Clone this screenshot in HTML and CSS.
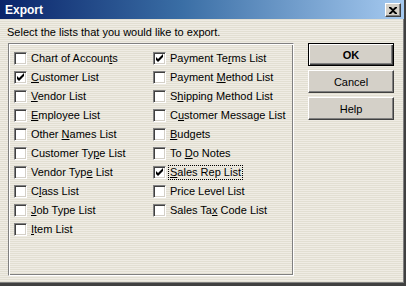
FILE: index.html
```html
<!DOCTYPE html>
<html lang="en">
<head>
    <meta charset="UTF-8">
    <title>Export</title>
    <link rel="stylesheet" href="styles.css">
</head>
<body>
    <div class="window">
        <!-- Title bar -->
        <div class="titlebar">
            <span class="title">Export</span>
            <span class="close">
                <svg width="8" height="7" viewBox="0 0 8 7">
                    <path d="M0 0h2l2 2 2-2h2v1L5 3.5 8 6v1H6L4 5 2 7H0V6l3-2.5L0 1z" fill="#000"/>
                </svg>
            </span>
        </div>

        <div class="content">
            <p class="intro">Select the lists that you would like to export.</p>

            <div class="main">
                <div class="group">
                    <div class="lists">
                        <label class="item"><span class="box"></span><span class="text">Chart of Accoun<u>t</u>s</span></label>
                        <label class="item"><span class="box checked"></span><span class="text">Payment Te<u>r</u>ms List</span></label>

                        <label class="item"><span class="box checked"></span><span class="text"><u>C</u>ustomer List</span></label>
                        <label class="item"><span class="box"></span><span class="text">Payment <u>M</u>ethod List</span></label>

                        <label class="item"><span class="box"></span><span class="text"><u>V</u>endor List</span></label>
                        <label class="item"><span class="box"></span><span class="text">S<u>h</u>ipping Method List</span></label>

                        <label class="item"><span class="box"></span><span class="text"><u>E</u>mployee List</span></label>
                        <label class="item"><span class="box"></span><span class="text">C<u>u</u>stomer Message List</span></label>

                        <label class="item"><span class="box"></span><span class="text">Other <u>N</u>ames List</span></label>
                        <label class="item"><span class="box"></span><span class="text"><u>B</u>udgets</span></label>

                        <label class="item"><span class="box"></span><span class="text">Customer Ty<u>p</u>e List</span></label>
                        <label class="item"><span class="box"></span><span class="text">To <u>D</u>o Notes</span></label>

                        <label class="item"><span class="box"></span><span class="text">Vendor Typ<u>e</u> List</span></label>
                        <label class="item"><span class="box checked"></span><span class="text focus"><u>S</u>ales Rep List</span></label>

                        <label class="item"><span class="box"></span><span class="text">C<u>l</u>ass List</span></label>
                        <label class="item"><span class="box"></span><span class="text">Price Level List</span></label>

                        <label class="item"><span class="box"></span><span class="text"><u>J</u>ob Type List</span></label>
                        <label class="item"><span class="box"></span><span class="text">Sales Ta<u>x</u> Code List</span></label>

                        <label class="item"><span class="box"></span><span class="text"><u>I</u>tem List</span></label>
                    </div>
                </div>

                <div class="buttons">
                    <button class="btn default">OK</button>
                    <button class="btn">Cancel</button>
                    <button class="btn">Help</button>
                </div>
            </div>
        </div>
    </div>
</body>
</html>
```

FILE: styles.css
```css
* {
    margin: 0;
    padding: 0;
    box-sizing: border-box;
    font-family: 'Liberation Sans', Arial, sans-serif;
}

body {
    background: #d4d0c8;
}

/* Dialog window */
.window {
    width: 406px;
    height: 286px;
    display: flex;
    flex-direction: column;
    background: repeating-linear-gradient(180deg, #efece4 0px, #efece4 1px, #e2dfd2 1px, #e2dfd2 2px);
    border-right: 2px solid #404040;
    border-bottom: 3px solid #404040;
    box-shadow: inset -1px -1px #808080;
}

/* Title bar */
.titlebar {
    height: 19px;
    display: flex;
    align-items: center;
    justify-content: space-between;
    padding: 0 3px 0 5px;
    background: linear-gradient(90deg, #0a246a 0%, #3a6ea5 45%, #a6caf0 100%);
}

.title {
    color: #fff;
    font-size: 12px;
    font-weight: bold;
}

.close {
    width: 16px;
    height: 14px;
    display: flex;
    align-items: center;
    justify-content: center;
    background: #d4d0c8;
    border-top: 1px solid #fff;
    border-left: 1px solid #fff;
    border-right: 1px solid #404040;
    border-bottom: 1px solid #404040;
    box-shadow: inset -1px -1px #808080;
    margin-top: 1px;
}

.content {
    flex: 1;
    padding: 7px 0 0 8px;
}

.intro {
    font-size: 11px;
    line-height: 13px;
    color: #000;
    margin-left: -1px;
    margin-bottom: 4px;
}

.main {
    display: flex;
    gap: 14px;
}

/* Group box */
.group {
    width: 286px;
    height: 233px;
    border: 1px solid #808080;
    border-right-color: #fff;
    border-bottom-color: #fff;
    box-shadow: inset 1px 1px #fff, inset -1px -1px #808080;
    padding: 5px 0 0 5px;
}

.lists {
    display: grid;
    grid-template-columns: 139px 1fr;
    grid-auto-rows: 19px;
}

.item {
    display: flex;
    align-items: center;
    font-size: 11px;
    color: #000;
    white-space: nowrap;
}

.text {
    line-height: 13px;
}

.box {
    width: 13px;
    height: 13px;
    flex: none;
    margin-right: 4px;
    background: #fff;
    border-top: 1px solid #808080;
    border-left: 1px solid #808080;
    border-right: 1px solid #fff;
    border-bottom: 1px solid #fff;
    box-shadow: inset 1px 1px #404040, inset -1px -1px #d4d0c8;
}

.box.checked {
    background: #fff url("data:image/svg+xml,%3Csvg xmlns='http://www.w3.org/2000/svg' width='11' height='11'%3E%3Cpath d='M2 4l2 2 5-5v3l-5 5-2-2z' fill='%23000'/%3E%3C/svg%3E") no-repeat 0 0;
}

.focus {
    outline: 1px dotted #000;
    outline-offset: 0;
    padding: 0 1px;
    margin-left: -1px;
}

/* Buttons */
.buttons {
    display: flex;
    flex-direction: column;
    gap: 4px;
}

.btn {
    width: 86px;
    height: 23px;
    font-size: 11px;
    color: #000;
    background: #d4d0c8;
    border-top: 1px solid #fff;
    border-left: 1px solid #fff;
    border-right: 1px solid #404040;
    border-bottom: 1px solid #404040;
    box-shadow: inset -1px -1px #808080;
}

.btn.default {
    font-weight: bold;
    border: 1px solid #000;
    box-shadow: inset 1px 1px #fff, inset -1px -1px #404040, inset -2px -2px #808080;
}
```
